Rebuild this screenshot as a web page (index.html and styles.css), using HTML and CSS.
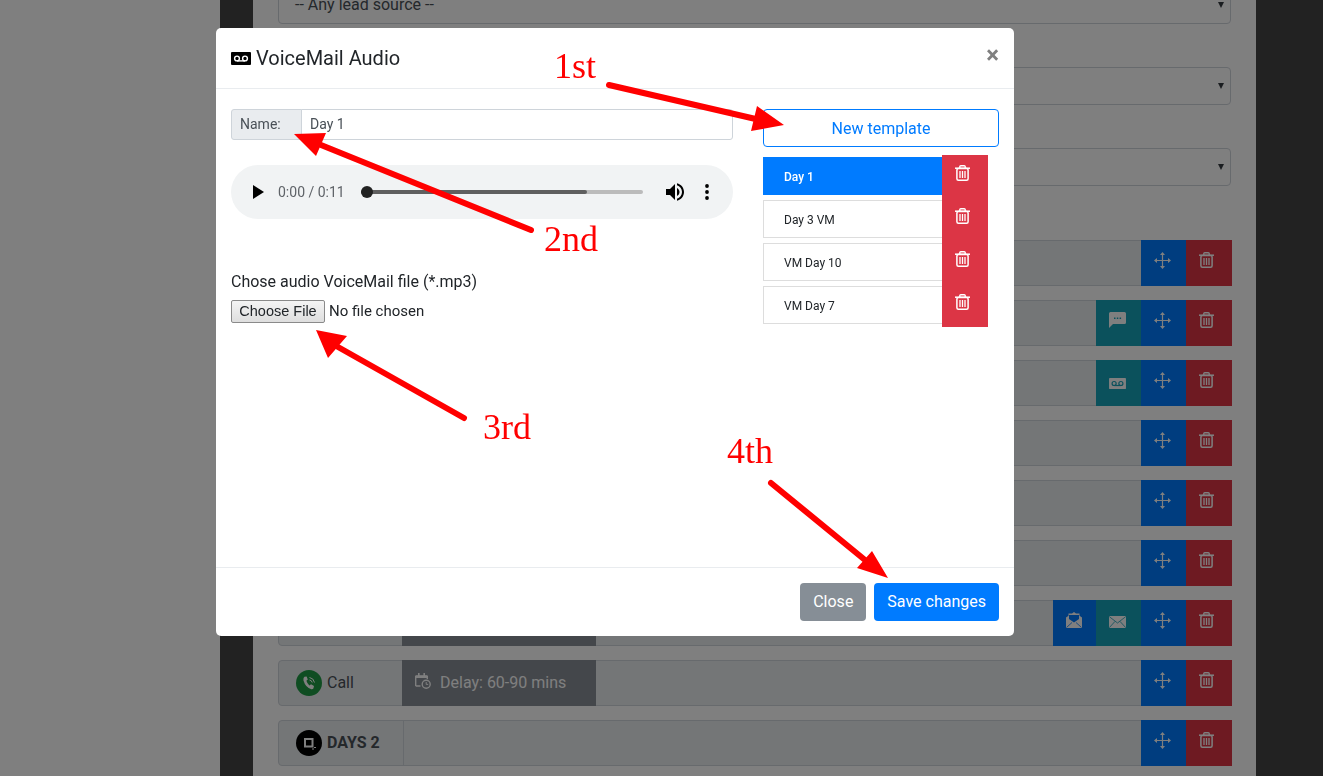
FILE: index.html
```html
<!DOCTYPE html>
<html lang="en">
<head>
    <meta charset="UTF-8">
    <meta name="viewport" content="width=device-width, initial-scale=1.0">
    <title>VoiceMail Audio</title>
    <link rel="stylesheet" href="styles.css">
</head>

<body>

    <svg class="icon-defs" xmlns="http://www.w3.org/2000/svg">
        <symbol id="i-trash" viewBox="0 0 15 16">
            <path d="M0 3.2H15" fill="none" stroke="currentColor" stroke-width="1.5"/>
            <path d="M4.8 3V1.6Q4.8.7 5.8.7H9.2Q10.2.7 10.2 1.6V3" fill="none" stroke="currentColor" stroke-width="1.4"/>
            <rect x="1.9" y="3.4" width="11.2" height="11.8" rx="1.5" fill="none" stroke="currentColor" stroke-width="1.5"/>
            <path d="M5 6V13M7.5 6V13M10 6V13" fill="none" stroke="currentColor" stroke-width="1.3"/>
        </symbol>
        <symbol id="i-move" viewBox="0 0 17 17">
            <path d="M8.5 2V15M2 8.5H15" fill="none" stroke="currentColor" stroke-width="1.2"/>
            <path d="M8.5 0L11 3H6ZM8.5 17L11 14H6ZM0 8.5L3 6V11ZM17 8.5L14 6V11Z" fill="currentColor"/>
        </symbol>
        <symbol id="i-vm" viewBox="0 0 20 13">
            <rect width="20" height="13" rx="1" fill="currentColor"/>
            <circle cx="6" cy="6.5" r="2.4" fill="none" stroke="var(--hole)" stroke-width="1.4"/>
            <circle cx="14" cy="6.5" r="2.4" fill="none" stroke="var(--hole)" stroke-width="1.4"/>
            <path d="M6 8.9H14" stroke="var(--hole)" stroke-width="1.4"/>
        </symbol>
        <symbol id="i-comment" viewBox="0 0 17 16">
            <path d="M1.5 0H15.5Q17 0 17 1.5V10.5Q17 12 15.5 12H4L0 16V1.5Q0 0 1.5 0Z" fill="currentColor"/>
            <path d="M5 6.3H6.5M7.8 6.3H9.3M10.6 6.3H12.1" stroke="#17a2b8" stroke-width="1.4"/>
        </symbol>
        <symbol id="i-mail" viewBox="0 0 17 12">
            <rect width="17" height="12" rx="1.2" fill="currentColor"/>
            <path d="M.5 .8L8.5 7L16.5 .8M.5 11.4L6 5.4M16.5 11.4L11 5.4" fill="none" stroke="#17a2b8" stroke-width=".8"/>
        </symbol>
        <symbol id="i-mail-open" viewBox="0 0 16 16">
            <path d="M0 5.5L2.5 3.8V1.5H6L8 0L10 1.5H13.5V3.8L16 5.5V16H0Z" fill="currentColor"/>
            <path d="M3 3H13V7L8 10.5L3 7Z" fill="#007bff"/>
            <path d="M.5 15.5L6 10.5M15.5 15.5L10 10.5" stroke="#007bff" stroke-width=".8"/>
        </symbol>
        <symbol id="i-delay" viewBox="0 0 16 16">
            <path d="M.7 13V3.5H12.3V6M.7 13H5.5" fill="none" stroke="currentColor" stroke-width="1.4"/>
            <path d="M.7 2.2H12.3V5H.7ZM3 0H4.6V2.5H3ZM8.4 0H10V2.5H8.4Z" fill="currentColor"/>
            <circle cx="11.2" cy="11.2" r="4" fill="none" stroke="currentColor" stroke-width="1.4"/>
            <path d="M11.2 9V11.4H13.2" fill="none" stroke="currentColor" stroke-width="1"/>
        </symbol>
        <symbol id="i-phone" viewBox="0 0 14 14">
            <path d="M2.5 0.8L4.6 .4L5.8 3.6L4.4 4.8Q5.2 7.6 7.4 9.4L9 8.2L12 10L11.4 12.4Q10.8 13.4 9.4 13.2Q3.4 11.4 1.4 4.2Q1.2 1.8 2.5 .8Z" fill="currentColor"/>
            <path d="M7.5 1.5Q11.5 2 12.5 6.5M7.5 4Q9.8 4.4 10.2 6.5" fill="none" stroke="currentColor" stroke-width="1"/>
        </symbol>
        <symbol id="i-days" viewBox="0 0 14 14">
            <rect x="3" y="3" width="7.5" height="7.5" fill="none" stroke="currentColor" stroke-width="2"/>
            <path d="M11 12V14M12 11.5H14" stroke="currentColor" stroke-width="1"/>
        </symbol>
    </svg>

    <div class="page">
        <div class="side"></div>
        <div class="gutter"></div>

        <main class="content">
            <div class="fake-select first">-- Any lead source --<span class="caret"></span></div>
            <div class="fake-select"><span class="caret"></span></div>
            <div class="fake-select"><span class="caret"></span></div>

            <div class="steps">
                <div class="step">
                    <div class="step-fill"></div>
                    <button class="act blue"><svg class="ic-move"><use href="#i-move"/></svg></button>
                    <button class="act red"><svg class="ic-trash"><use href="#i-trash"/></svg></button>
                </div>
                <div class="step">
                    <div class="step-fill"></div>
                    <button class="act teal"><svg class="ic-comment"><use href="#i-comment"/></svg></button>
                    <button class="act blue"><svg class="ic-move"><use href="#i-move"/></svg></button>
                    <button class="act red"><svg class="ic-trash"><use href="#i-trash"/></svg></button>
                </div>
                <div class="step">
                    <div class="step-fill"></div>
                    <button class="act teal"><svg class="ic-vm"><use href="#i-vm"/></svg></button>
                    <button class="act blue"><svg class="ic-move"><use href="#i-move"/></svg></button>
                    <button class="act red"><svg class="ic-trash"><use href="#i-trash"/></svg></button>
                </div>
                <div class="step">
                    <div class="step-fill"></div>
                    <button class="act blue"><svg class="ic-move"><use href="#i-move"/></svg></button>
                    <button class="act red"><svg class="ic-trash"><use href="#i-trash"/></svg></button>
                </div>
                <div class="step">
                    <div class="step-fill"></div>
                    <button class="act blue"><svg class="ic-move"><use href="#i-move"/></svg></button>
                    <button class="act red"><svg class="ic-trash"><use href="#i-trash"/></svg></button>
                </div>
                <div class="step">
                    <div class="step-fill"></div>
                    <button class="act blue"><svg class="ic-move"><use href="#i-move"/></svg></button>
                    <button class="act red"><svg class="ic-trash"><use href="#i-trash"/></svg></button>
                </div>
                <div class="step">
                    <div class="step-label"></div>
                    <div class="step-delay"></div>
                    <div class="step-fill"></div>
                    <button class="act blue narrow"><svg class="ic-open"><use href="#i-mail-open"/></svg></button>
                    <button class="act teal"><svg class="ic-mail"><use href="#i-mail"/></svg></button>
                    <button class="act blue"><svg class="ic-move"><use href="#i-move"/></svg></button>
                    <button class="act red"><svg class="ic-trash"><use href="#i-trash"/></svg></button>
                </div>
                <div class="step">
                    <div class="step-label">
                        <span class="badge green"><svg class="ic-badge"><use href="#i-phone"/></svg></span>
                        Call
                    </div>
                    <div class="step-delay">
                        <svg class="ic-delay"><use href="#i-delay"/></svg>
                        Delay: 60-90 mins
                    </div>
                    <div class="step-fill"></div>
                    <button class="act blue"><svg class="ic-move"><use href="#i-move"/></svg></button>
                    <button class="act red"><svg class="ic-trash"><use href="#i-trash"/></svg></button>
                </div>
                <div class="step">
                    <div class="step-label split">
                        <span class="badge black"><svg class="ic-badge"><use href="#i-days"/></svg></span>
                        <b>DAYS 2</b>
                    </div>
                    <div class="step-fill"></div>
                    <button class="act blue"><svg class="ic-move"><use href="#i-move"/></svg></button>
                    <button class="act red"><svg class="ic-trash"><use href="#i-trash"/></svg></button>
                </div>
            </div>
        </main>

        <div class="gutter right"></div>
    </div>

    <div class="backdrop"></div>

    <div class="modal">
        <div class="modal-header">
            <h5 class="modal-title"><svg class="ic-title"><use href="#i-vm"/></svg>VoiceMail Audio</h5>
            <span class="close">&times;</span>
        </div>

        <div class="modal-body">
            <div class="col-left">
                <div class="input-group">
                    <span class="input-addon">Name:</span>
                    <input class="input-name" type="text" value="Day 1">
                </div>

                <div class="player">
                    <svg class="ic-play" viewBox="0 0 11 14"><path d="M0 0L11 7L0 14Z"/></svg>
                    <span class="time">0:00 / 0:11</span>
                    <div class="track">
                        <div class="track-played"></div>
                        <div class="track-knob"></div>
                    </div>
                    <svg class="ic-volume" viewBox="0 0 24 24"><path d="M3 9v6h4l5 5V4L7 9H3zm13.5 3c0-1.77-1.02-3.29-2.5-4.03v8.05c1.48-.73 2.5-2.25 2.5-4.02zM14 3.23v2.06c2.89.86 5 3.54 5 6.71s-2.11 5.85-5 6.71v2.06c4.01-.91 7-4.49 7-8.77s-2.99-7.86-7-8.77z"/></svg>
                    <svg class="ic-dots" viewBox="0 0 4 16"><circle cx="2" cy="2" r="1.9"/><circle cx="2" cy="8" r="1.9"/><circle cx="2" cy="14" r="1.9"/></svg>
                </div>

                <label class="file-label">Chose audio VoiceMail file (*.mp3)</label>
                <input class="file-input" type="file">
            </div>

            <div class="col-right">
                <button class="btn-new">New template</button>
                <div class="tpl-list">
                    <div class="tpl-row">
                        <div class="tpl-name active">Day 1</div>
                        <button class="tpl-del"><svg class="ic-trash"><use href="#i-trash"/></svg></button>
                    </div>
                    <div class="tpl-row">
                        <div class="tpl-name">Day 3 VM</div>
                        <button class="tpl-del"><svg class="ic-trash"><use href="#i-trash"/></svg></button>
                    </div>
                    <div class="tpl-row">
                        <div class="tpl-name">VM Day 10</div>
                        <button class="tpl-del"><svg class="ic-trash"><use href="#i-trash"/></svg></button>
                    </div>
                    <div class="tpl-row">
                        <div class="tpl-name">VM Day 7</div>
                        <button class="tpl-del"><svg class="ic-trash"><use href="#i-trash"/></svg></button>
                    </div>
                </div>
            </div>
        </div>

        <div class="modal-footer">
            <button class="btn btn-gray">Close</button>
            <button class="btn btn-blue">Save changes</button>
        </div>
    </div>

    <!-- hand drawn notes on top of the screenshot -->
    <svg class="arrows" viewBox="0 0 1323 776">
        <path d="M609 85L760 120M531 230L321 145M464 418L338 347M771 483L865 560" fill="none" stroke="#f00" stroke-width="6" stroke-linecap="round"/>
        <path d="M784 125L757 106L751 131ZM294 134L326 133L316 156ZM316 330L347 336L328 358ZM888 578L872 551L857 568Z" fill="#f00"/>
    </svg>
    <span class="note note-1">1st</span>
    <span class="note note-2">2nd</span>
    <span class="note note-3">3rd</span>
    <span class="note note-4">4th</span>

</body>
</html>
```

FILE: styles.css
```css
* {
    margin: 0;
    padding: 0;
    box-sizing: border-box;
    font-family: 'Roboto', sans-serif;
}

body {
    background-color: #fff;
    overflow: hidden;
    height: 776px;
    color: #212529;
}

.icon-defs {
    display: none;
}

.page {
    display: flex;
    height: 776px;
    overflow: hidden;
}

.side {
    width: 220px;
}

.gutter {
    width: 33px;
    background: #444;
}

.gutter.right {
    width: 67px;
}

.content {
    width: 1003px;
    padding: 0 24px 0 25px;
}

.fake-select {
    height: 38px;
    margin: 0 1px 43px 0;
    padding: 0 16px;
    border: 1px solid #ced4da;
    border-radius: 4px;
    font-size: 16px;
    line-height: 36px;
    color: #495057;
    position: relative;
}

.fake-select.first {
    margin-top: -14px;
}

.caret {
    position: absolute;
    right: 6px;
    top: 15px;
    border-top: 6px solid #343a40;
    border-left: 3.5px solid transparent;
    border-right: 3.5px solid transparent;
}

.steps {
    margin-top: 54px;
    display: flex;
    flex-direction: column;
    gap: 14px;
}

.step {
    display: flex;
    height: 46px;
    background: #e9ecef;
    border: 1px solid #ced4da;
    border-radius: 4px;
    font-size: 16px;
    color: #495057;
}

.step-label {
    width: 123px;
    padding: 0 0 2px 17px;
    display: flex;
    align-items: center;
    gap: 5px;
}

.badge {
    margin-top: 2px;
    width: 26px;
    height: 26px;
    border-radius: 50%;
    display: flex;
    align-items: center;
    justify-content: center;
    color: #fff;
}

.step-label.split {
    width: 125px;
    border-right: 1px solid #ced4da;
}

.step-delay {
    width: 194px;
    margin: -1px 0;
    padding: 0 0 2px 13px;
    display: flex;
    align-items: center;
    gap: 9px;
    background: #888e96;
    color: #fff;
}

.step-fill {
    flex: 1;
}

.badge.green {
    background: #1e9a44;
}

.badge.black {
    background: #000;
}

.ic-badge {
    width: 14px;
    height: 14px;
}

.ic-delay {
    width: 16px;
    height: 16px;
    margin-bottom: 3px;
}

.act {
    width: 45px;
    margin: -1px 0;
    border: none;
    color: #fff;
    display: flex;
    justify-content: center;
    padding: 12px 2px 0 0;
}

.act.narrow {
    width: 43px;
}

.act.blue {
    background: #007bff;
}

.act.teal {
    background: #17a2b8;
}

.act.red {
    background: #dc3545;
    margin-right: -1px;
    width: 46px;
    padding-right: 6px;
}

.ic-move {
    width: 17px;
    height: 17px;
}

.ic-trash {
    width: 15px;
    height: 16px;
}

.ic-comment {
    width: 17px;
    height: 16px;
}

.ic-vm {
    --hole: #17a2b8;
    width: 17px;
    height: 11px;
    margin-top: 6px;
}

.ic-mail {
    width: 17px;
    height: 12px;
    margin-top: 4px;
}

.ic-open {
    width: 16px;
    height: 16px;
}

.backdrop {
    position: fixed;
    top: 0;
    left: 0;
    right: 0;
    bottom: 0;
    background: rgba(0, 0, 0, 0.5);
}

.modal {
    position: absolute;
    left: 216px;
    top: 28px;
    width: 798px;
    height: 608px;
    background: #fff;
    border-radius: 5px;
    display: flex;
    flex-direction: column;
}

.modal-header {
    height: 61px;
    flex-shrink: 0;
    padding: 0 15px;
    border-bottom: 1px solid #e9ecef;
    display: flex;
    align-items: center;
    justify-content: space-between;
}

.modal-title {
    font-size: 20px;
    font-weight: 400;
    line-height: 60px;
    color: #212529;
    display: flex;
    align-items: center;
}

.ic-title {
    --hole: #fff;
    width: 20px;
    height: 13px;
    margin-right: 5px;
    color: #000;
}

.close {
    font-size: 24px;
    font-weight: 700;
    color: #808080;
    margin-top: -6px;
}

.modal-body {
    flex: 1;
    display: flex;
    gap: 30px;
    padding: 20px 15px 0;
}

.col-left {
    width: 502px;
}

.col-right {
    width: 236px;
}

.input-group {
    display: flex;
    height: 31px;
}

.input-addon {
    width: 71px;
    padding-left: 8px;
    font-size: 14px;
    line-height: 29px;
    color: #495057;
    background: #e9ecef;
    border: 1px solid #ced4da;
    border-radius: 3px 0 0 3px;
}

.input-name {
    flex: 1;
    margin-left: -1px;
    padding: 0 0 2px 8px;
    font-size: 14px;
    color: #495057;
    border: 1px solid #ced4da;
    border-radius: 0 3px 3px 0;
    outline: none;
}

.player {
    margin-top: 25px;
    height: 54px;
    border-radius: 27px;
    background: #f1f3f4;
    display: flex;
    align-items: center;
    padding-left: 22px;
}

.ic-play {
    width: 11px;
    height: 14px;
    fill: #000;
}

.time {
    margin-left: 14px;
    width: 83px;
    font-size: 14px;
    color: #5f6368;
}

.track {
    width: 282px;
    height: 4px;
    border-radius: 2px;
    background: #bbb;
    position: relative;
}

.track-played {
    width: 226px;
    height: 4px;
    border-radius: 2px;
    background: #5f5f5f;
}

.track-knob {
    position: absolute;
    left: 0;
    top: -4px;
    width: 12px;
    height: 12px;
    border-radius: 50%;
    background: #222;
}

.ic-volume {
    width: 24px;
    height: 24px;
    margin-left: 20px;
    fill: #000;
}

.ic-dots {
    width: 4px;
    height: 16px;
    margin-left: 18px;
    fill: #000;
}

.file-label {
    display: block;
    margin-top: 53px;
    font-size: 16px;
    line-height: 19px;
    color: #212529;
}

.file-input {
    display: block;
    margin-top: 9px;
    width: 300px;
    font-size: 15px;
    color: #212529;
}

.file-input::file-selector-button {
    height: 23px;
    width: 94px;
    margin-right: 4px;
    padding: 0 0 1px;
    font-size: 14.5px;
    color: #212529;
    background: linear-gradient(#f4f4f4, #dedede);
    border: 1px solid #8a8a8a;
    border-radius: 2px;
}

.btn-new {
    display: block;
    width: 236px;
    height: 38px;
    font-size: 16px;
    color: #007bff;
    background: #fff;
    border: 1px solid #007bff;
    border-radius: 4px;
}

.tpl-list {
    margin-top: 8px;
}

.tpl-row {
    display: flex;
    height: 43px;
    width: 225px;
}

.tpl-name {
    width: 179px;
    height: 38px;
    margin-top: 2px;
    padding-left: 20px;
    font-size: 12px;
    line-height: 38px;
    color: #212529;
    border: 1px solid #ddd;
    border-right: none;
}

.tpl-name.active {
    color: #fff;
    font-weight: 500;
    background: #007bff;
    border-color: #007bff;
}

.tpl-del {
    width: 46px;
    border: none;
    background: #dc3545;
    color: #fff;
    padding: 10px 5px 0 0;
    display: flex;
    justify-content: center;
}

.modal-footer {
    height: 69px;
    flex-shrink: 0;
    padding-right: 15px;
    border-top: 1px solid #e9ecef;
    display: flex;
    align-items: center;
    justify-content: flex-end;
    gap: 8px;
}

.btn {
    height: 38px;
    padding: 0 13px 2px;
    font-size: 16px;
    color: #fff;
    border: none;
    border-radius: 4px;
}

.btn-gray {
    background: #868e96;
}

.btn-blue {
    background: #007bff;
}

.arrows {
    position: absolute;
    left: 0;
    top: 0;
    width: 1323px;
    height: 776px;
    pointer-events: none;
}

.note {
    position: absolute;
    font-family: 'Liberation Serif', serif;
    font-size: 36px;
    line-height: 40px;
    color: #f00;
}

.note-1 {
    left: 554px;
    top: 46px;
}

.note-2 {
    left: 544px;
    top: 219px;
}

.note-3 {
    left: 483px;
    top: 407px;
}

.note-4 {
    left: 727px;
    top: 431px;
}
```
